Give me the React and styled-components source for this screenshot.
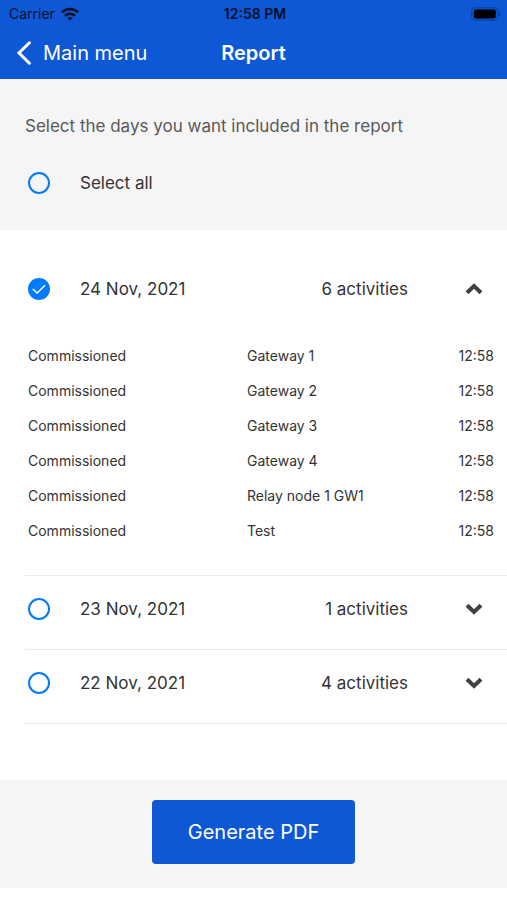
import React, { useState } from 'react';
import styled, { createGlobalStyle } from 'styled-components';

const blue = '#0e57d5';
const brightBlue = '#007aff';
const lightGrey = '#f5f5f5';
const lineGrey = '#ebebeb';
const textGrey = '#595959';
const textDark = '#333333';

const DAYS = [
  {
    date: '24 Nov, 2021',
    count: 6,
    activities: [
      { action: 'Commissioned', device: 'Gateway 1', time: '12:58' },
      { action: 'Commissioned', device: 'Gateway 2', time: '12:58' },
      { action: 'Commissioned', device: 'Gateway 3', time: '12:58' },
      { action: 'Commissioned', device: 'Gateway 4', time: '12:58' },
      { action: 'Commissioned', device: 'Relay node 1 GW1', time: '12:58' },
      { action: 'Commissioned', device: 'Test', time: '12:58' },
    ],
  },
  { date: '23 Nov, 2021', count: 1, activities: [] },
  { date: '22 Nov, 2021', count: 4, activities: [] },
];

const WifiIcon = () => (
  <svg width="18" height="14" viewBox="0 0 18 14" aria-hidden="true">
    <g fill="none" stroke="#06102b" strokeWidth="2.7">
      <path d="M1 5.2C5.5 0.9 12.5 0.9 17 5.2" />
      <path d="M4 8.7C6.8 6.1 11.2 6.1 14 8.7" />
    </g>
    <path d="M9 13.8L6.2 11C7.8 9.6 10.2 9.6 11.8 11Z" fill="#06102b" />
  </svg>
);

const BatteryIcon = () => (
  <svg width="30" height="14" viewBox="0 0 30 14" aria-hidden="true">
    <rect x="0.8" y="0.8" width="26" height="12.4" rx="3.8" fill="none" stroke="#0b3f9e" strokeWidth="1.2" />
    <rect x="2.8" y="2.4" width="22" height="9.2" rx="2" fill="#000" />
    <path d="M28.2 5V9C29.2 8.6 29.7 7.9 29.7 7S29.2 5.4 28.2 5Z" fill="#0b3f9e" />
  </svg>
);

const BackIcon = () => (
  <svg width="16" height="24" viewBox="0 0 16 24" aria-hidden="true">
    <path d="M13.4 1.8L3 12L13.4 22.2" fill="none" stroke="#fff" strokeWidth="3" strokeLinecap="round" />
  </svg>
);

const Chevron = ({ open }) => (
  <svg width="18" height="12" viewBox="0 0 18 12" aria-hidden="true">
    <path
      d={open ? 'M2 9.8L9 3L16 9.8' : 'M2 2.2L9 9L16 2.2'}
      fill="none"
      stroke="#404040"
      strokeWidth="4"
    />
  </svg>
);

const Check = ({ label, ...props }) => (
  <CheckLabel>
    <CheckCircle>
      <CheckInput type="checkbox" {...props} />
      <CheckMark viewBox="0 0 22 22" aria-hidden="true">
        <path d="M4.8 11L9.2 15L17 7.2" fill="none" stroke="#fff" strokeWidth="1.6" />
      </CheckMark>
    </CheckCircle>
    {label}
  </CheckLabel>
);

const Day = ({ day, checked, onCheck, open, onToggle }) => (
  <DaySection>
    <DayHead>
      <Check label={day.date} checked={checked} onChange={onCheck} />
      <span>{day.count} activities</span>
      <ToggleButton
        type="button"
        aria-expanded={open}
        aria-label={`Activities of ${day.date}`}
        onClick={onToggle}
      >
        <Chevron open={open} />
      </ToggleButton>
    </DayHead>
    {open && day.activities.length > 0 && (
      <ActivityTable>
        <tbody>
          {day.activities.map(({ action, device, time }) => (
            <tr key={device}>
              <ActivityCell>{action}</ActivityCell>
              <ActivityCell>{device}</ActivityCell>
              <ActivityCell $align="right">{time}</ActivityCell>
            </tr>
          ))}
        </tbody>
      </ActivityTable>
    )}
  </DaySection>
);

const App = () => {
  const [selected, setSelected] = useState([DAYS[0].date]);
  const [opened, setOpened] = useState([DAYS[0].date]);

  const toggle = (list, date) =>
    list.includes(date) ? list.filter(item => item !== date) : [...list, date];

  const allSelected = selected.length === DAYS.length;

  return (
    <Page>
      <GlobalStyle />
      <Header>
        <StatusBar>
          <Carrier>
            Carrier
            <WifiIcon />
          </Carrier>
          <Clock>12:58 PM</Clock>
          <Battery>
            <BatteryIcon />
          </Battery>
        </StatusBar>
        <NavBar>
          <BackLink href="#menu">
            <BackIcon />
            Main menu
          </BackLink>
          <Title>Report</Title>
        </NavBar>
      </Header>
      <Intro>
        <IntroText>Select the days you want included in the report</IntroText>
        <Check
          label="Select all"
          checked={allSelected}
          onChange={() => setSelected(allSelected ? [] : DAYS.map(day => day.date))}
        />
      </Intro>
      <DayList>
        {DAYS.map(day => (
          <Day
            key={day.date}
            day={day}
            checked={selected.includes(day.date)}
            onCheck={() => setSelected(toggle(selected, day.date))}
            open={opened.includes(day.date)}
            onToggle={() => setOpened(toggle(opened, day.date))}
          />
        ))}
      </DayList>
      <Footer>
        <PrimaryButton type="button">Generate PDF</PrimaryButton>
      </Footer>
    </Page>
  );
};

const GlobalStyle = createGlobalStyle`
  * {
    box-sizing: border-box;
  }

  body {
    margin: 0;
    background: #fff;
    color: ${textDark};
    font-family: Inter, 'Liberation Sans', sans-serif;
    font-size: 17px;
    line-height: 24px;
  }
`;

const Page = styled.div`
  display: flex;
  flex-direction: column;
  min-height: 100vh;
  padding-bottom: 12px;
`;

const Header = styled.header`
  background: ${blue};
  color: #fff;
`;

const StatusBar = styled.div`
  display: grid;
  grid-template-columns: 1fr auto 1fr;
  align-items: center;
  height: 27px;
  padding: 0 6px 0 9px;

  color: #06102b;
  font-size: 14px;
  line-height: 16px;
`;

const Carrier = styled.div`
  display: flex;
  align-items: center;
  gap: 6px;
`;

const Clock = styled.div`
  font-weight: 600;
`;

const Battery = styled.div`
  display: flex;
  justify-content: flex-end;
`;

const NavBar = styled.nav`
  display: grid;
  grid-template-columns: 1fr auto 1fr;
  align-items: center;
  height: 52px;
  padding: 0 16px;

  font-size: 20px;
`;

const BackLink = styled.a`
  display: flex;
  align-items: center;
  gap: 11px;

  color: inherit;
  text-decoration: none;
`;

const Title = styled.h1`
  margin: 0;
  font-size: 20px;
  font-weight: 600;
`;

const Intro = styled.section`
  padding: 35px 25px;
  background: ${lightGrey};
`;

const IntroText = styled.p`
  margin: 0 0 33px;
  color: ${textGrey};
`;

const CheckLabel = styled.label`
  display: flex;
  align-items: center;
  gap: 30px;
  padding-left: 3px;
  cursor: pointer;
`;

const CheckCircle = styled.span`
  display: grid;
  width: 22px;
  height: 22px;

  > * {
    grid-area: 1 / 1;
  }
`;

const CheckInput = styled.input`
  appearance: none;
  width: 22px;
  height: 22px;
  margin: 0;

  border: 2px solid ${brightBlue};
  border-radius: 50%;
  cursor: pointer;

  &:checked {
    background: ${brightBlue};
  }
`;

const CheckMark = styled.svg`
  width: 22px;
  height: 22px;
  visibility: hidden;
  pointer-events: none;

  ${CheckInput}:checked + & {
    visibility: visible;
  }
`;

const DayList = styled.main`
  flex: 1;
  padding: 26px 0 56px 25px;
`;

const DaySection = styled.section`
  padding-bottom: 7px;
  border-bottom: 1px solid ${lineGrey};
`;

const DayHead = styled.div`
  display: grid;
  grid-template-columns: 1fr auto 99px;
  align-items: center;
  height: 66px;
`;

const ToggleButton = styled.button`
  display: flex;
  align-items: center;
  justify-content: flex-end;
  height: 44px;
  padding: 0 24px 0 0;

  border: 0;
  background: none;
  cursor: pointer;
`;

const ActivityTable = styled.table`
  width: 100%;
  margin: 16px 0 20px;
  padding: 0 13px 0 3px;

  border-spacing: 0;
  font-size: 14px;
  line-height: 20px;
`;

const ActivityCell = styled.td`
  height: 35px;
  padding: 0;
  text-align: ${props => props.$align || 'left'};

  &:first-child {
    width: 47%;
  }
`;

const Footer = styled.footer`
  display: flex;
  justify-content: center;
  padding: 20px 25px 24px;
  background: ${lightGrey};
`;

const PrimaryButton = styled.button`
  padding: 20px 36px;

  border: 0;
  border-radius: 4px;
  background: ${blue};
  color: #fff;
  font-family: inherit;
  font-size: 20px;
  line-height: 24px;
  cursor: pointer;
`;

export default App;
